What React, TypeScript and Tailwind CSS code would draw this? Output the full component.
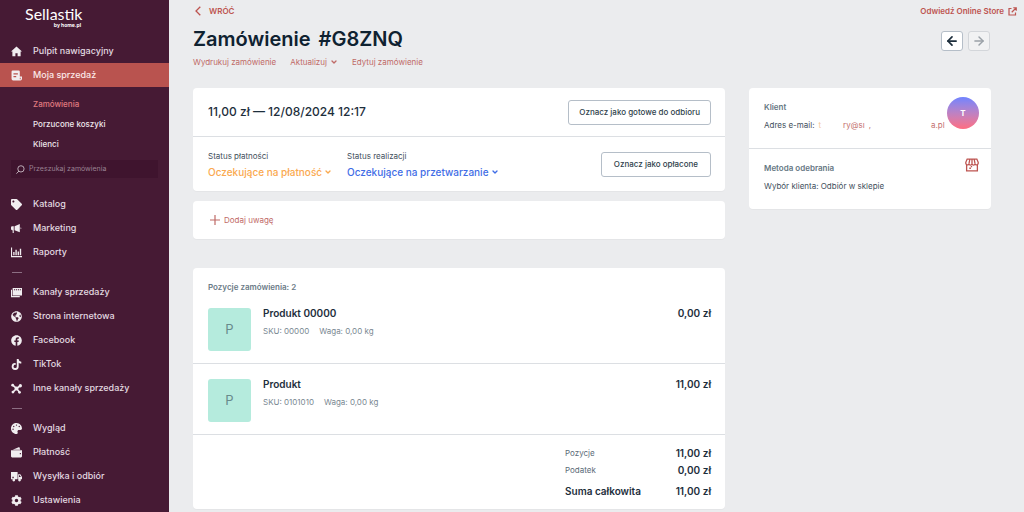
import { useState } from 'react';
import type { ElementType, ReactNode } from 'react';
import { FaTag, FaFacebook, FaTiktok, FaGlobeAmericas, FaPalette, FaCog } from 'react-icons/fa';
import { ArrowLeft, ArrowRight, ChevronDown } from 'lucide-react';

interface IconProps {
  className?: string;
}

interface NavItem {
  name: string;
  icon: ElementType;
}

interface OrderItem {
  name: string;
  sku: string;
  weight: string;
  price: string;
}

function HomeIcon({ className }: IconProps) {
  return (
    <svg viewBox="0 0 20 20" className={className} fill="currentColor" aria-hidden="true">
      <path d="M10 1 0 10h2.500v8.500H8V13h4v5.500h5.500V10H20L10 1Z" />
    </svg>
  );
}

function ReceiptIcon({ className }: IconProps) {
  return (
    <svg viewBox="0 0 20 20" className={className} fill="currentColor" aria-hidden="true">
      <path
        fillRule="evenodd"
        d="M3 1h11a2 2 0 0 1 2 2v9h4v4a3 3 0 0 1-3 3H4a3 3 0 0 1-3-3V3a2 2 0 0 1 2-2Zm1.500 5v2h8V6h-8Zm0 5v2h5v-2h-5ZM16 14v3h1.500v-3H16Z"
      />
    </svg>
  );
}

function MegaphoneIcon({ className }: IconProps) {
  return (
    <svg viewBox="0 0 20 20" className={className} fill="currentColor" aria-hidden="true">
      <path d="M0 8a2 2 0 0 1 2-2h3v12H3V13H2a2 2 0 0 1-2-2V8ZM6.500 6 16 2v15l-9.500-4V6ZM17.500 7.500a2.500 2.500 0 0 1 0 4v-4Z" />
    </svg>
  );
}

function ReportsIcon({ className }: IconProps) {
  return (
    <svg viewBox="0 0 20 20" className={className} fill="currentColor" aria-hidden="true">
      <path d="M0 1h2v15.500h18v2H0V1ZM4 9h2.500v6H4V9ZM8 5h2.500v10H8V5ZM12 8h2.500v7H12V8ZM16 3h2.500v12H16V3Z" />
    </svg>
  );
}

function ChannelsIcon({ className }: IconProps) {
  return (
    <svg viewBox="0 0 20 20" className={className} fill="currentColor" aria-hidden="true">
      <path d="M0 5h2v11.500h14v2H0V5Z" />
      <path fillRule="evenodd" d="M3 2h17v13.500H3V2Zm2.500 2v2h2V4h-2ZM9 4v2h2V4H9Zm3.500 0v2h2V4h-2ZM16 4v2h2V4h-2Z" />
    </svg>
  );
}

function NodesIcon({ className }: IconProps) {
  return (
    <svg viewBox="0 0 20 20" className={className} aria-hidden="true">
      <path d="m3 4 7 6 7-5M10 10l-6 6M10 10l5 6" fill="none" stroke="currentColor" strokeWidth="3" />
      <g fill="currentColor">
        <circle cx="3" cy="4" r="2.500" />
        <circle cx="17" cy="5" r="3" />
        <circle cx="10" cy="10" r="3.500" />
        <circle cx="3.500" cy="16.500" r="2.500" />
        <circle cx="15.500" cy="17" r="2.500" />
      </g>
    </svg>
  );
}

function WalletIcon({ className }: IconProps) {
  return (
    <svg viewBox="0 0 20 20" className={className} fill="currentColor" aria-hidden="true">
      <path d="M3 5 15 0l2 5H3Z" />
      <path fillRule="evenodd" d="M0 6h20v11a2 2 0 0 1-2 2H2a2 2 0 0 1-2-2V6Zm16 5v2h2v-2h-2Z" />
    </svg>
  );
}

function TruckIcon({ className }: IconProps) {
  return (
    <svg viewBox="0 0 20 20" className={className} fill="currentColor" aria-hidden="true">
      <path fillRule="evenodd" d="M0 2h12v13H0V2Zm2.500 8.500V13H5v-2.500H2.500ZM13 6h4l3 5v4h-7V6Zm1.500 1.500V11H18l-2-3.500h-1.500Z" />
      <circle cx="5" cy="16.500" r="2.500" />
      <circle cx="15.500" cy="16.500" r="2.500" />
    </svg>
  );
}

function SearchIcon({ className }: IconProps) {
  return (
    <svg viewBox="0 0 10 10" className={className} fill="none" stroke="currentColor" aria-hidden="true">
      <circle cx="5.500" cy="4.300" r="3.500" />
      <path d="M3 7 .8 9.300" strokeLinecap="round" />
    </svg>
  );
}

function StoreIcon({ className }: IconProps) {
  return (
    <svg viewBox="0 0 26 26" className={className} fill="none" stroke="currentColor" strokeWidth="2.400" aria-hidden="true">
      <path d="M4 2h18l2.500 6v2a3 3 0 0 1-5.700 1 3 3 0 0 1-5.800 0 3 3 0 0 1-5.800 0A3 3 0 0 1 1.500 10V8L4 2ZM9 2l-1.500 8M17 2l1.500 8M13 2v8" />
      <path d="M3 13v11h20V13M8 19h3M12 17v-2" />
    </svg>
  );
}

function ExternalIcon({ className }: IconProps) {
  return (
    <svg viewBox="0 0 18 18" className={className} fill="none" stroke="currentColor" strokeWidth="2.400" aria-hidden="true">
      <path d="M7 3H2v13h13v-5M10.500 1.500h6v6M16 2l-8.500 8.500" />
    </svg>
  );
}

function BackIcon({ className }: IconProps) {
  return (
    <svg viewBox="0 0 6 10" className={className} fill="none" stroke="currentColor" strokeWidth="1.300" aria-hidden="true">
      <path d="M5.300.7 1 5l4.300 4.300" />
    </svg>
  );
}

function PlusIcon({ className }: IconProps) {
  return (
    <svg viewBox="0 0 10 10" className={className} fill="none" stroke="currentColor" strokeWidth="1.200" aria-hidden="true">
      <path d="M5 0v10M0 5h10" />
    </svg>
  );
}

const mainItems: NavItem[] = [
  { name: 'Katalog', icon: FaTag },
  { name: 'Marketing', icon: MegaphoneIcon },
  { name: 'Raporty', icon: ReportsIcon },
];

const channelItems: NavItem[] = [
  { name: 'Kanały sprzedaży', icon: ChannelsIcon },
  { name: 'Strona internetowa', icon: FaGlobeAmericas },
  { name: 'Facebook', icon: FaFacebook },
  { name: 'TikTok', icon: FaTiktok },
  { name: 'Inne kanały sprzedaży', icon: NodesIcon },
];

const configItems: NavItem[] = [
  { name: 'Wygląd', icon: FaPalette },
  { name: 'Płatność', icon: WalletIcon },
  { name: 'Wysyłka i odbiór', icon: TruckIcon },
  { name: 'Ustawienia', icon: FaCog },
];

const salesLinks = ['Zamówienia', 'Porzucone koszyki', 'Klienci'];

const orderItems: OrderItem[] = [
  { name: 'Produkt 00000', sku: '00000', weight: '0,00 kg', price: '0,00 zł' },
  { name: 'Produkt', sku: '0101010', weight: '0,00 kg', price: '11,00 zł' },
];

function NavLink({ item, active = false }: { item: NavItem; active?: boolean }) {
  const Icon = item.icon;
  return (
    <a
      href="#"
      className={`flex h-6 items-center gap-[11px] pl-[11px] text-[9px] font-medium ${
        active ? 'bg-[#b9534f] text-[#fbe9ea]' : 'text-[#e3dbe1]'
      }`}
    >
      <Icon className="size-[11px] shrink-0 text-[#f1edf0]" />
      {item.name}
    </a>
  );
}

function NavGroup({ items }: { items: NavItem[] }) {
  return (
    <>
      {items.map((item) => (
        <NavLink key={item.name} item={item} />
      ))}
    </>
  );
}

function NavDivider() {
  return (
    <div className="flex h-4 items-center pl-3">
      <hr className="w-[10px] border-[#8c6f83]" />
    </div>
  );
}

function Sidebar() {
  const [query, setQuery] = useState('');

  return (
    <aside className="w-[169px] shrink-0 bg-[#461a34]">
      <div className="h-[39px] pl-[25px] pt-1.5 text-white">
        <div className="w-14">
          <div className="font-['Lato',sans-serif] text-[16px] leading-4">Sellastik</div>
          <div className="text-right text-[5px] font-bold leading-[6px]">by home.pl</div>
        </div>
      </div>

      <nav>
        <NavLink item={{ name: 'Pulpit nawigacyjny', icon: HomeIcon }} />
        <NavLink item={{ name: 'Moja sprzedaż', icon: ReceiptIcon }} active />
        <div className="pb-1.5 pt-[7px]">
          {salesLinks.map((name, index) => (
            <a
              key={name}
              href="#"
              className={`flex h-5 items-center pl-[33px] text-[8px] font-medium ${
                index === 0 ? 'text-[#e07b80]' : 'text-[#eee6eb]'
              }`}
            >
              {name}
            </a>
          ))}
        </div>
        <label className="mx-[11px] mb-3.5 flex h-[18px] items-center gap-1 bg-[#3f142e] pl-[5px]">
          <SearchIcon className="size-[9px] shrink-0 text-[#c9bcc5]" />
          <input
            type="text"
            aria-label="Przeszukaj zamówienia"
            placeholder="Przeszukaj zamówienia"
            value={query}
            onChange={(e) => setQuery(e.target.value)}
            className="w-full min-w-0 bg-transparent text-[7px] text-[#e3dbe1] outline-none placeholder:text-[#9a8293]"
          />
        </label>
        <NavGroup items={mainItems} />
        <NavDivider />
        <NavGroup items={channelItems} />
        <NavDivider />
        <NavGroup items={configItems} />
      </nav>
    </aside>
  );
}

function Card({ className = '', children }: { className?: string; children: ReactNode }) {
  return <section className={`rounded bg-white shadow-[0_1px_1px_rgba(0,0,0,0.03)] ${className}`}>{children}</section>;
}

function StatusMenu({ label, value, color }: { label: string; value: string; color: string }) {
  return (
    <div>
      <div className="text-[8px] leading-4 text-[#3f4f5c]">{label}</div>
      <button type="button" className={`flex items-center gap-0.5 text-[10px] font-medium leading-4 ${color}`}>
        {value}
        <ChevronDown className="size-2" strokeWidth={4} />
      </button>
    </div>
  );
}

function OrderSummary() {
  return (
    <Card>
      <div className="flex h-12 items-center justify-between pl-[15px] pr-[14px]">
        <h2 className="text-[12px] font-medium text-[#1d2e3c]">11,00 zł — 12/08/2024 12:17</h2>
        <button type="button" className="h-[25px] rounded-[3px] border border-[#b5bec8] px-2.5 text-[8px] font-medium text-[#2f3f4c]">
          Oznacz jako gotowe do odbioru
        </button>
      </div>
      <div className="flex items-center justify-between border-t border-[#dcdfe3] py-[11px] pl-[15px] pr-[14px]">
        <div className="flex gap-[15px]">
          <StatusMenu label="Status płatności" value="Oczekujące na płatność" color="text-[#faa94f]" />
          <StatusMenu label="Status realizacji" value="Oczekujące na przetwarzanie" color="text-[#3f6de6]" />
        </div>
        <button type="button" className="h-[25px] rounded-[3px] border border-[#b5bec8] px-3 text-[8px] font-medium text-[#2f3f4c]">
          Oznacz jako opłacone
        </button>
      </div>
    </Card>
  );
}

function OrderItems() {
  return (
    <Card className="mt-[29px]">
      <h2 className="px-[15px] pt-[11px] text-[8px] font-semibold leading-4 text-[#6b7b87]">Pozycje zamówienia: 2</h2>
      {orderItems.map((item, index) => (
        <article
          key={item.sku}
          className={`flex gap-3 border-b border-[#dcdfe3] pb-3 pl-[15px] pr-[14px] ${index === 0 ? 'pt-[13px]' : 'pt-[15px]'}`}
        >
          <div className="flex size-[43px] shrink-0 items-center justify-center rounded-[3px] bg-[#b5ebdd] text-[13px] text-[#688a8b]">
            P
          </div>
          <div className="flex-1">
            <h3 className="text-[10px] font-semibold leading-[11px] text-[#1d2e3c]">{item.name}</h3>
            <p className="mt-1 flex gap-2.5 text-[8px] leading-4 text-[#7a8892]">
              <span>SKU: {item.sku}</span>
              <span>Waga: {item.weight}</span>
            </p>
          </div>
          <span className="text-[10px] font-semibold leading-[11px] text-[#1d2e3c]">{item.price}</span>
        </article>
      ))}
      <dl className="ml-auto grid w-[160px] grid-cols-[1fr_auto] pb-[9px] pr-[14px] pt-2.5 text-[10px] leading-[17px] text-[#1d2e3c]">
        <dt className="text-[8px] text-[#5b6b77]">Pozycje</dt>
        <dd className="text-right font-semibold">11,00 zł</dd>
        <dt className="text-[8px] text-[#5b6b77]">Podatek</dt>
        <dd className="text-right font-semibold">0,00 zł</dd>
        <dt className="pt-1 font-semibold">Suma całkowita</dt>
        <dd className="pt-1 text-right font-semibold">11,00 zł</dd>
      </dl>
    </Card>
  );
}

function CustomerCard() {
  return (
    <Card>
      <div className="flex h-[60px] justify-between pl-[15px] pr-3 pt-[9px]">
        <div className="pt-0.5 text-[8px]">
          <h2 className="font-semibold leading-4 text-[#667783]">Klient</h2>
          <p className="mt-0.5 flex whitespace-nowrap leading-4 text-[#3f4f5c]">
            Adres e-mail:
            <a href="#" className="flex text-[#c4706f]">
              <span className="ml-1 text-[#f5c9a0]">t</span>
              <span className="ml-[22px]">ry@sı</span>
              <span className="ml-1">,</span>
              <span className="ml-[60px]">a.pl</span>
            </a>
          </p>
        </div>
        <div className="flex size-8 shrink-0 items-center justify-center rounded-full bg-gradient-to-b from-[#6f83ff] to-[#ff6c80] text-[8px] font-bold text-white">
          T
        </div>
      </div>
      <div className="flex h-[61px] justify-between border-t border-[#dcdfe3] pl-[15px] pr-3 pt-[9px]">
        <div className="pt-0.5 text-[8px]">
          <h2 className="font-semibold leading-4 text-[#667783]">Metoda odebrania</h2>
          <p className="mt-0.5 leading-4 text-[#3f4f5c]">Wybór klienta: Odbiór w sklepie</p>
        </div>
        <StoreIcon className="size-[14px] text-[#bd5450]" />
      </div>
    </Card>
  );
}

export default function App() {
  return (
    <div className="flex min-h-screen bg-[#ebecee] font-['Inter',sans-serif]">
      <Sidebar />

      <main className="min-w-0 flex-1 pb-[3px] pl-6">
        <div className="flex h-[22px] items-center justify-between pr-[7px] text-[8px] font-semibold text-[#bd5450]">
          <a href="#" className="flex items-center gap-2 pl-0.5">
            <BackIcon className="h-2.5 w-1.5" />
            WRÓĆ
          </a>
          <a href="#" className="flex items-center gap-1">
            Odwiedź Online Store
            <ExternalIcon className="size-[9px]" />
          </a>
        </div>

        <div className="pr-[33px]">
          <header className="flex justify-between pt-1">
            <div>
              <h1 className="flex gap-2 text-[20px] font-semibold leading-[27px] text-[#0f2231]">
                <span>Zamówienie</span>
                <span>#G8ZNQ</span>
              </h1>
              <div className="flex h-[18px] items-center gap-3.5 text-[8px] text-[#bf6a67]">
                <a href="#">Wydrukuj zamówienie</a>
                <button type="button" className="flex items-center gap-[3px]">
                  Aktualizuj
                  <ChevronDown className="size-2" strokeWidth={4} />
                </button>
                <a href="#">Edytuj zamówienie</a>
              </div>
            </div>
            <div className="flex gap-[5px] pr-px pt-[5px]">
              <button
                type="button"
                aria-label="Poprzednie zamówienie"
                className="flex h-5 w-[22px] items-center justify-center rounded-[3px] border border-[#b5bec8] bg-white text-[#1d2e3c]"
              >
                <ArrowLeft className="size-[14px]" strokeWidth={3} />
              </button>
              <button
                type="button"
                aria-label="Następne zamówienie"
                className="flex h-5 w-[22px] items-center justify-center rounded-[3px] border border-[#d3d6da] bg-[#f1f2f3] text-[#9aa1a8]"
                disabled
              >
                <ArrowRight className="size-[14px]" strokeWidth={2.5} />
              </button>
            </div>
          </header>

          <div className="mt-[17px] grid grid-cols-[minmax(0,1fr)_242px] items-start gap-6">
            <div>
              <OrderSummary />
              <Card className="mt-2.5 flex h-[38px] items-center px-[17px]">
                <button type="button" className="flex items-center gap-1 text-[8px] text-[#bf6a67]">
                  <PlusIcon className="size-2.5" />
                  Dodaj uwagę
                </button>
              </Card>
              <OrderItems />
            </div>
            <CustomerCard />
          </div>
        </div>
      </main>
    </div>
  );
}
